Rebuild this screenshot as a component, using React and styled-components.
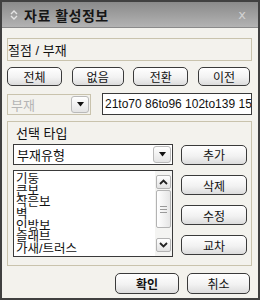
import React from 'react'
import styled, { createGlobalStyle } from 'styled-components'

const GlobalStyle = createGlobalStyle`
  html, body {
    margin: 0;
    padding: 0;
    background: #ffffff;
  }
  * { box-sizing: border-box; }
`

const KR = `"Liberation Sans", "Noto Sans CJK KR", sans-serif`

const Window = styled.div`
  width: 260px;
  height: 300px;
  border: 2px solid #404040;
  background: #f3f2ed;
  display: flex;
  flex-direction: column;
  font-family: ${KR};
  color: #111;
`
const TitleBar = styled.div`
  height: 26px;
  display: flex;
  align-items: center;
  padding: 0 12px 0 8px;
  background: linear-gradient(#8a8a8a, #b3b3b3);
  border-bottom: 1px solid #8a8a8a;
`
const TitleText = styled.div`
  flex: 1;
  margin-left: 6px;
  font-size: 14px;
  font-weight: bold;
  color: #161616;
  letter-spacing: 0.5px;
`
const CloseMark = styled.div`
  font-size: 13px;
  color: #d2d2d2;
  font-family: "DejaVu Sans", sans-serif;
`
const Body = styled.div`
  flex: 1;
  display: flex;
  flex-direction: column;
  padding: 10px 6px 0 5px;
`
const InfoBox = styled.div`
  height: 23px;
  border: 1px solid #c9c3ad;
  display: flex;
  align-items: center;
  font-size: 13px;
`
const ButtonRow = styled.div`
  display: flex;
  justify-content: space-between;
  margin-top: 6px;
  padding-right: 2px;
`
const Button = styled.button`
  width: ${p => p.w || 53}px;
  height: ${p => p.h || 19}px;
  padding: 0;
  border: 1px solid #3a3a3a;
  border-radius: 5px;
  background: linear-gradient(#ffffff 0%, #f2f2f2 55%, #dcdcdc 100%);
  font-family: ${KR};
  font-size: 12px;
  font-weight: ${p => (p.bold ? 'bold' : 'normal')};
  color: #111;
  display: flex;
  align-items: center;
  justify-content: center;
`
const FilterRow = styled.div`
  display: flex;
  align-items: center;
  margin-top: 7px;
  gap: 11px;
`
const Select = styled.div`
  width: ${p => p.w}px;
  height: 21px;
  display: flex;
  align-items: stretch;
  background: ${p => (p.disabled ? '#f3f2ed' : '#ffffff')};
  border: 1px solid ${p => (p.disabled ? '#c9c3ad' : '#3a3a3a')};
`
const SelectValue = styled.div`
  flex: 1;
  display: flex;
  align-items: center;
  padding-left: 3px;
  font-size: 13px;
  color: ${p => (p.disabled ? '#b5b5b5' : '#111')};
`
const ArrowBox = styled.div`
  width: 18px;
  margin: 1px;
  display: flex;
  align-items: center;
  justify-content: center;
  border: 1px solid #b9b9b9;
  border-radius: 3px;
  background: linear-gradient(#ffffff, #e4e4e4);
`
const TextInput = styled.div`
  flex: 1;
  height: 22px;
  border: 1px solid #3a3a3a;
  background: #ffffff;
  font-size: 12px;
  padding-left: 2px;
  display: flex;
  align-items: center;
  white-space: nowrap;
  overflow: hidden;
`
const GroupBox = styled.div`
  margin-top: 6px;
  height: 145px;
  border: 1px solid #c9c3ad;
  padding: 5px 4px 0 5px;
  display: flex;
  flex-direction: column;
`
const GroupLabel = styled.div`
  font-size: 13px;
  padding-left: 3px;
  height: 14px;
  line-height: 14px;
`
const ComboRow = styled.div`
  display: flex;
  justify-content: space-between;
  align-items: center;
  margin-top: 3px;
`
const ListRow = styled.div`
  display: flex;
  justify-content: space-between;
  margin-top: 5px;
`
const ListBox = styled.div`
  width: 160px;
  height: 87px;
  border: 1px solid #3a3a3a;
  background: #ffffff;
  display: flex;
`
const ListItems = styled.div`
  flex: 1;
  padding: 2px 0 0 2px;
  overflow: hidden;
`
const ListItem = styled.div`
  font-size: 12.5px;
  line-height: 12px;
  height: 11.7px;
`
const ScrollBar = styled.div`
  width: 17px;
  background: #f4f4f2;
  display: flex;
  flex-direction: column;
  justify-content: space-between;
  padding: 4px 0 4px 0;
`
const ScrollButton = styled.div`
  height: 14px;
  margin: 0 1px;
  border: 1px solid #b3b3b3;
  border-radius: 2px;
  background: linear-gradient(#ffffff, #e2e2e2);
  display: flex;
  align-items: center;
  justify-content: center;
`
const ScrollThumb = styled.div`
  flex: 1;
  margin: 1px 1px 10px 1px;
  border: 1px solid #b3b3b3;
  border-radius: 2px;
  background: linear-gradient(90deg, #ffffff, #e6e6e6);
  display: flex;
  flex-direction: column;
  align-items: center;
  justify-content: center;
  gap: 2px;
`
const Grip = styled.div`
  width: 7px;
  height: 1px;
  background: #9a9a9a;
`
const ButtonColumn = styled.div`
  display: flex;
  flex-direction: column;
  gap: 10px;
  padding-top: 5px;
`
const Footer = styled.div`
  display: flex;
  justify-content: flex-end;
  gap: 8px;
  margin-top: 7px;
  padding-right: 2px;
`

const TitleIcon = () => (
  <svg width="8" height="10" viewBox="0 0 8 10">
    <path d="M1 4 L4 1 L7 4" fill="none" stroke="#e4e4e4" strokeWidth="1.4" />
    <path d="M1 6 L4 9 L7 6" fill="none" stroke="#e4e4e4" strokeWidth="1.4" />
  </svg>
)

const DownTriangle = () => (
  <svg width="7" height="5" viewBox="0 0 7 5">
    <path d="M0 0 L7 0 L3.5 4.5 Z" fill="#111" />
  </svg>
)

const Chevron = ({ up }) => (
  <svg width="9" height="6" viewBox="0 0 9 6">
    <path
      d={up ? 'M1 5 L4.5 1.5 L8 5' : 'M1 1 L4.5 4.5 L8 1'}
      fill="none"
      stroke="#222"
      strokeWidth="1.8"
    />
  </svg>
)

const types = ['기둥', '큰보', '작은보', '벽', '인방보', '슬래브', '가새/트러스']

export default function App() {
  return (
    <>
      <GlobalStyle />
      <Window>
        <TitleBar>
          <TitleIcon />
          <TitleText>자료 활성정보</TitleText>
          <CloseMark>x</CloseMark>
        </TitleBar>
        <Body>
          <InfoBox>절점 / 부재</InfoBox>
          <ButtonRow>
            <Button w={55}>전체</Button>
            <Button w={52}>없음</Button>
            <Button w={55}>전환</Button>
            <Button w={52}>이전</Button>
          </ButtonRow>
          <FilterRow>
            <Select w={84} disabled>
              <SelectValue disabled>부재</SelectValue>
              <ArrowBox><DownTriangle /></ArrowBox>
            </Select>
            <TextInput>21to70 86to96 102to139 155to160</TextInput>
          </FilterRow>
          <GroupBox>
            <GroupLabel>선택 타입</GroupLabel>
            <ComboRow>
              <Select w={160}>
                <SelectValue>부재유형</SelectValue>
                <ArrowBox><DownTriangle /></ArrowBox>
              </Select>
              <Button w={66} h={20}>추가</Button>
            </ComboRow>
            <ListRow>
              <ListBox>
                <ListItems>
                  {types.map(t => <ListItem key={t}>{t}</ListItem>)}
                </ListItems>
                <ScrollBar>
                  <ScrollButton><Chevron up /></ScrollButton>
                  <ScrollThumb>
                    <Grip /><Grip /><Grip />
                  </ScrollThumb>
                  <ScrollButton><Chevron /></ScrollButton>
                </ScrollBar>
              </ListBox>
              <ButtonColumn>
                <Button w={66} h={20}>삭제</Button>
                <Button w={66} h={20}>수정</Button>
                <Button w={66} h={20}>교차</Button>
              </ButtonColumn>
            </ListRow>
          </GroupBox>
          <Footer>
            <Button w={64} h={21} bold>확인</Button>
            <Button w={63} h={21}>취소</Button>
          </Footer>
        </Body>
      </Window>
    </>
  )
}
